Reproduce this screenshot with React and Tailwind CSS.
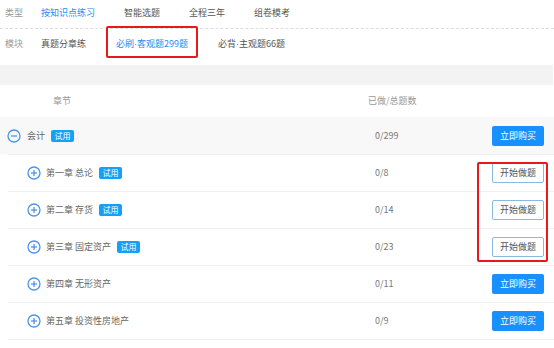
const types = ["按知识点练习", "智能选题", "全程三年", "组卷模考"];
const modules = [
  ["真题分章练"],
  ["必刷", "客观题299题"],
  ["必背", "主观题66题"],
];

const chapters = [
  { name: "第一章 总论", done: "0/8", trial: true },
  { name: "第二章 存货", done: "0/14", trial: true },
  { name: "第三章 固定资产", done: "0/23", trial: true },
  { name: "第四章 无形资产", done: "0/11", trial: false },
  { name: "第五章 投资性房地产", done: "0/9", trial: false },
];

function CircleIcon({ minus }) {
  return (
    <svg width="14" height="14" viewBox="0 0 14 14" className="shrink-0">
      <circle cx="7" cy="7" r="6" fill="none" stroke="#4d94ec" strokeWidth="1.3" />
      <line x1="4" y1="7" x2="10" y2="7" stroke="#4d94ec" strokeWidth="1.3" />
      {!minus && <line x1="7" y1="4" x2="7" y2="10" stroke="#4d94ec" strokeWidth="1.3" />}
    </svg>
  );
}

function Badge() {
  return (
    <span className="ml-[6px] inline-flex h-[12px] w-[23px] items-center justify-center rounded-[2px] bg-[#14a0f5] text-[8px] leading-none text-white">
      试用
    </span>
  );
}

function BuyButton() {
  return (
    <button className="flex h-[20px] w-[52px] items-center justify-center rounded-[2px] bg-[#1890ff] text-[9px] text-white">
      立即购买
    </button>
  );
}

function StartButton() {
  return (
    <button className="flex h-[20px] w-[52px] items-center justify-center rounded-[2px] border border-[#8bb8e3] bg-white text-[9px] text-[#555]">
      开始做题
    </button>
  );
}

function ChapterRow({ c }) {
  return (
    <div className="flex h-[37px] items-center border-b border-[#f0f0f0] ml-2">
      <div className="flex flex-1 items-center pl-[19px]">
        <CircleIcon />
        <span className="ml-[5px] text-[#666]">{c.name}</span>
        {c.trial && <Badge />}
      </div>
      <div className="w-[117px] text-[#777]">{c.done}</div>
      <div className="w-[62px]">{c.trial ? <StartButton /> : <BuyButton />}</div>
    </div>
  );
}

export default function App() {
  return (
    <div className="h-[348px] w-[554px] overflow-hidden bg-white font-['Noto_Sans_CJK_SC',sans-serif] text-[9px] leading-[12px]">
      <div className="flex h-[29px] items-start border-b border-dashed border-[#ddd] pt-[7px]">
        <span className="w-[41px] pl-[5px] text-[#999]">类型</span>
        <div className="flex gap-[29px]">
          {types.map((t, i) => (
            <span key={t} className={i === 0 ? "text-[#1d8cf5]" : "text-[#555]"}>
              {t}
            </span>
          ))}
        </div>
      </div>

      <div className="flex h-[36px] items-start pt-[9px]">
        <span className="w-[41px] pl-[5px] text-[#999]">模块</span>
        <div className="flex gap-[30px]">
          {modules.map((m, i) => (
            <span key={m.join()} className={i === 1 ? "relative text-[#1d8cf5]" : "text-[#555]"}>
              {m[0]}
              {m[1] && (
                <>
                  <span className="font-['Liberation_Sans',sans-serif]">·</span>
                  {m[1]}
                </>
              )}
              {i === 1 && (
                <span className="absolute left-[-10px] top-[-12px] h-[32px] w-[92px] rounded-[2px] border-2 border-[#e8191c]" />
              )}
            </span>
          ))}
        </div>
      </div>

      <div className="h-[20px] bg-[#f3f3f3] mr-[1px]" />

      <div className="flex h-[32px] items-center text-[#999]">
        <div className="flex-1 pl-[53px]">章节</div>
        <div className="w-[186px]">已做/总题数</div>
      </div>

      <div className="flex h-[37px] items-center bg-[#f8f8f8]">
        <div className="flex flex-1 items-center pl-[7px]">
          <CircleIcon minus />
          <span className="ml-[6px] text-[#666]">会计</span>
          <Badge />
        </div>
        <div className="w-[117px] text-[#777]">0/299</div>
        <div className="w-[62px]">
          <BuyButton />
        </div>
      </div>
      <div className="ml-2 h-px bg-[#f0f0f0]" />

      <div className="relative">
        {chapters.map((c) => (
          <ChapterRow key={c.name} c={c} />
        ))}
        <div className="absolute right-[6px] top-[7px] h-[100px] w-[71px] rounded-[2px] border-2 border-[#e8191c]" />
      </div>
    </div>
  );
}
